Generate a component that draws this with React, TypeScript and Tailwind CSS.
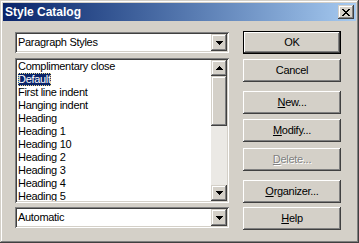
import React from 'react';

const sunken =
    'shadow-[inset_1px_1px_0_#808080,inset_-1px_-1px_0_#ffffff,inset_2px_2px_0_#404040,inset_-2px_-2px_0_#d4d0c8]';
const raised =
    'shadow-[inset_-1px_-1px_0_#404040,inset_1px_1px_0_#ffffff,inset_-2px_-2px_0_#808080,inset_2px_2px_0_#d4d0c8]';
const raisedSmall =
    'shadow-[inset_-1px_-1px_0_#404040,inset_1px_1px_0_#d4d0c8,inset_-2px_-2px_0_#808080,inset_2px_2px_0_#ffffff]';

const styles = [
    'Complimentary close',
    'Default',
    'First line indent',
    'Hanging indent',
    'Heading',
    'Heading 1',
    'Heading 10',
    'Heading 2',
    'Heading 3',
    'Heading 4',
    'Heading 5',
];

const DownArrow = () => (
    <svg width="7" height="4" viewBox="0 0 7 4" shapeRendering="crispEdges">
        <path d="M0 0h7v1h-1v1h-1v1h-1v1h-1v-1h-1v-1h-1v-1h-1z" fill="#000" />
    </svg>
);

const UpArrow = () => (
    <svg width="7" height="4" viewBox="0 0 7 4" shapeRendering="crispEdges">
        <path d="M0 4h7v-1h-1v-1h-1v-1h-1v-1h-1v1h-1v1h-1v1h-1z" fill="#000" />
    </svg>
);

// combobox: sunken white field + arrow button
const Combo = ({ value }: { value: string }) => (
    <div className={`h-[21px] bg-white p-[2px] flex ${sunken}`}>
        <div className="flex-1 pl-[1px] flex items-center">{value}</div>
        <div className={`w-[16px] bg-[#d4d0c8] flex items-center justify-center ${raisedSmall}`}>
            <DownArrow />
        </div>
    </div>
);

const Btn = ({
    children,
    mt = '',
    isDefault = false,
    disabled = false,
}: {
    children: React.ReactNode;
    mt?: string;
    isDefault?: boolean;
    disabled?: boolean;
}) => (
    <div className={`h-[23px] ${mt} ${isDefault ? 'border border-black' : ''}`}>
        <div
            className={`h-full flex items-center justify-center ${raised} ${
                disabled ? 'text-[#808080] [text-shadow:1px_1px_0_#ffffff]' : 'text-black'
            }`}
        >
            {children}
        </div>
    </div>
);

export default function App() {
    return (
        <div className="font-['Liberation_Sans',Arial,sans-serif] text-[11px] tracking-[-0.3px] text-black">
            <div
                className={`w-[359px] h-[243px] bg-[#d4d0c8] p-[3px] flex flex-col shadow-[inset_-1px_-1px_0_#404040,inset_1px_1px_0_#d4d0c8,inset_-2px_-2px_0_#808080,inset_2px_2px_0_#ffffff]`}
            >
                {/* Title bar */}
                <div className="h-[18px] bg-linear-to-r from-[#0a246a] to-[#a6caf0] flex items-center pl-[2px] pr-[2px]">
                    <span className="flex-1 text-white font-bold text-[12px] tracking-normal">Style Catalog</span>
                    <div className={`w-[16px] h-[14px] bg-[#d4d0c8] flex items-center justify-center ${raisedSmall}`}>
                        <svg width="8" height="7" viewBox="0 0 8 7" shapeRendering="crispEdges">
                            <path
                                d="M0 0h2v1h1v1h2v-1h1v-1h2v1h-1v1h-1v1h-1v1h1v1h1v1h1v1h-2v-1h-1v-1h-2v1h-1v1h-2v-1h1v-1h1v-1h1v-1h-1v-1h-1v-1h-1z"
                                fill="#000"
                            />
                        </svg>
                    </div>
                </div>

                {/* Body */}
                <div className="flex px-[12px] pt-[10px] gap-[14px]">
                    {/* Left column */}
                    <div className="w-[214px] mt-[1px] flex flex-col">
                        <Combo value="Paragraph Styles" />

                        <div className={`mt-[5px] h-[145px] bg-white p-[2px] flex ${sunken}`}>
                            <div className="flex-1 overflow-hidden pl-[1px]">
                                {styles.map((s) => (
                                    <div key={s} className="h-[13px] leading-[13px] whitespace-nowrap">
                                        {s === 'Default' ? (
                                            <span className="inline-block h-[13px] bg-[#0a246a] text-white outline outline-1 outline-dotted outline-[#e8d890] -outline-offset-1">
                                                {s}
                                            </span>
                                        ) : (
                                            <span>{s}</span>
                                        )}
                                    </div>
                                ))}
                            </div>
                            {/* Scrollbar */}
                            <div className="w-[16px] flex flex-col bg-[#ebe9e5]">
                                <div className={`h-[16px] bg-[#d4d0c8] flex items-center justify-center ${raisedSmall}`}>
                                    <UpArrow />
                                </div>
                                <div className={`h-[50px] bg-[#d4d0c8] ${raisedSmall}`} />
                                <div className="flex-1" />
                                <div className={`h-[16px] bg-[#d4d0c8] flex items-center justify-center ${raisedSmall}`}>
                                    <DownArrow />
                                </div>
                            </div>
                        </div>

                        <div className="mt-[4px]">
                            <Combo value="Automatic" />
                        </div>
                    </div>

                    {/* Right column */}
                    <div className="w-[98px] flex flex-col">
                        <Btn isDefault>OK</Btn>
                        <Btn mt="mt-[5px]">Cancel</Btn>
                        <Btn mt="mt-[9px]">
                            <span><u>N</u>ew...</span>
                        </Btn>
                        <Btn mt="mt-[5px]">
                            <span><u>M</u>odify...</span>
                        </Btn>
                        <Btn mt="mt-[6px]" disabled>
                            <span><u>D</u>elete...</span>
                        </Btn>
                        <Btn mt="mt-[9px]">
                            <span><u>O</u>rganizer...</span>
                        </Btn>
                        <Btn mt="mt-[4px]">
                            <span><u>H</u>elp</span>
                        </Btn>
                    </div>
                </div>
            </div>
        </div>
    );
}
